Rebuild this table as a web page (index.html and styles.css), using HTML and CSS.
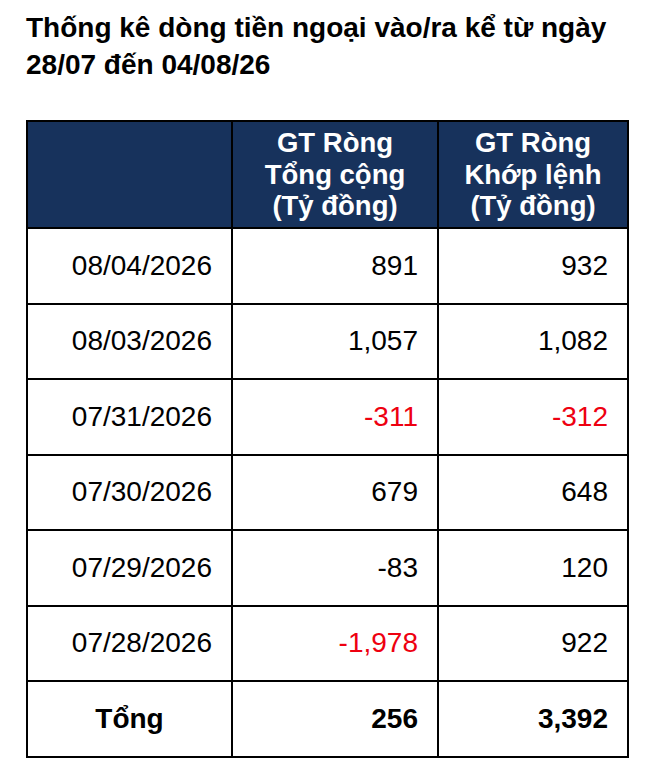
FILE: index.html
```html
<!DOCTYPE html>
<html lang="vi">
<head>
<meta charset="utf-8">
<title>Thống kê dòng tiền ngoại</title>
<link rel="stylesheet" href="styles.css">
</head>
<body>
<div class="page">
  <h1 class="title">Thống kê dòng tiền ngoại vào/ra kể từ ngày 28/07 đến 04/08/26</h1>
  <table class="flow">
    <colgroup>
      <col class="c1"><col class="c2"><col class="c3">
    </colgroup>
    <thead>
      <tr class="head">
        <th></th>
        <th>GT Ròng<br>Tổng cộng<br>(Tỷ đồng)</th>
        <th>GT Ròng<br>Khớp lệnh<br>(Tỷ đồng)</th>
      </tr>
    </thead>
    <tbody>
      <tr><td class="date">08/04/2026</td><td>891</td><td>932</td></tr>
      <tr><td class="date">08/03/2026</td><td>1,057</td><td>1,082</td></tr>
      <tr><td class="date">07/31/2026</td><td class="neg">-311</td><td class="neg">-312</td></tr>
      <tr><td class="date">07/30/2026</td><td>679</td><td>648</td></tr>
      <tr><td class="date">07/29/2026</td><td>-83</td><td>120</td></tr>
      <tr><td class="date">07/28/2026</td><td class="neg">-1,978</td><td>922</td></tr>
      <tr class="total"><td class="label">Tổng</td><td>256</td><td>3,392</td></tr>
    </tbody>
  </table>
</div>
</body>
</html>
```

FILE: styles.css
```css
html, body {
  margin: 0;
  padding: 0;
  background: #ffffff;
}
body {
  font-family: "Liberation Sans", Arial, sans-serif;
  color: #000;
}
.page {
  padding: 9px 0 0 26px;
}
.title {
  margin: 0;
  width: 610px;
  font-size: 28px;
  line-height: 37px;
  font-weight: bold;
}
.flow {
  margin-top: 37px;
  border-collapse: collapse;
  table-layout: fixed;
  width: 601px;
}
.c1 { width: 205px; }
.c2 { width: 206px; }
.c3 { width: 190px; }
.flow th, .flow td {
  border: 2px solid #000;
  padding: 0 19px 0 0;
}
.head th {
  background: #17325c;
  color: #fff;
  font-size: 27.5px;
  line-height: 31.5px;
  font-weight: bold;
  text-align: center;
  padding: 0;
  height: 105px;
}
.flow td {
  height: 73.5px;
  font-size: 28px;
  text-align: right;
  vertical-align: middle;
}
.neg { color: #ee0010; }
.total td { font-weight: bold; }
.total td.label { text-align: center; padding: 0; }
```
